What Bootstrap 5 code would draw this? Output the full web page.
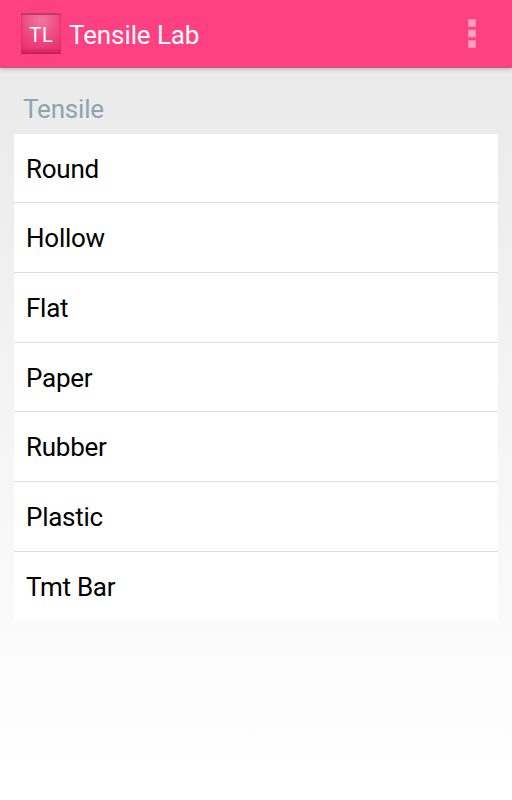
<!DOCTYPE html>
<html lang="en"><head><meta charset="utf-8"><meta name="viewport" content="width=device-width, initial-scale=1"><title>Tensile Lab</title>
<link href="https://cdn.jsdelivr.net/npm/bootstrap@5.3.0/dist/css/bootstrap.min.css" rel="stylesheet">
<style>
body{font-family:Roboto,sans-serif;background:linear-gradient(#e9e9e9,#ececec 140px,#f9f9f9 580px,#fff 780px);height:800px;overflow:hidden;color:#000}
.app-bar{height:68px;background:#ff4081;box-shadow:0 1px 4px rgba(0,0,0,.25);border-bottom:1px solid #d84f80;padding:0 36px 0 21px}
.logo{width:40px;height:41px;background:radial-gradient(circle at 50% 15%,#f277a0,#ee4880 50%,#e62c69);border-top:2px solid #b83e6a;border-bottom:1px solid #b91b54;box-shadow:inset 0 -3px 3px #d4245f;font-size:20px;letter-spacing:1px;padding-left:1px;padding-top:2px}
.app-title{font-size:26px;margin-left:8px;letter-spacing:-.1px;padding-top:3px}
.section-title{font-size:26px;line-height:30px;letter-spacing:-.2px;color:#90a4ae;padding:26px 0 0 9px;height:66px}
.sheet{padding:0 14px}
.list-group-item{height:69.7px;font-size:26px;letter-spacing:-.25px;padding:2px 12px 0;color:#000;border-color:#ddd}
.list-group-item:first-child{height:69.3px}
.list-group-item:last-child{height:67.2px;padding-top:5px}
</style></head><body>
<nav class="app-bar d-flex align-items-center text-white">
<div class="logo d-flex align-items-center justify-content-center">TL</div><span class="app-title">Tensile Lab</span>
<svg class="ms-auto" width="8" height="29" fill="#ff9fc0" stroke="#ff87ae"><path d="M.5.5h7v7h-7zM.5 11h7v7h-7zM.5 21.5h7v7h-7z"/></svg></nav>
<main class="sheet"><h1 class="section-title m-0 fw-normal">Tensile</h1>
<ul class="list-group list-group-flush"><li class="list-group-item d-flex align-items-center">Round</li><li class="list-group-item d-flex align-items-center">Hollow</li><li class="list-group-item d-flex align-items-center">Flat</li><li class="list-group-item d-flex align-items-center">Paper</li><li class="list-group-item d-flex align-items-center">Rubber</li><li class="list-group-item d-flex align-items-center">Plastic</li><li class="list-group-item d-flex align-items-center">Tmt Bar</li></ul></main>
<script src="https://cdn.jsdelivr.net/npm/bootstrap@5.3.0/dist/js/bootstrap.bundle.min.js"></script>
</body></html>
